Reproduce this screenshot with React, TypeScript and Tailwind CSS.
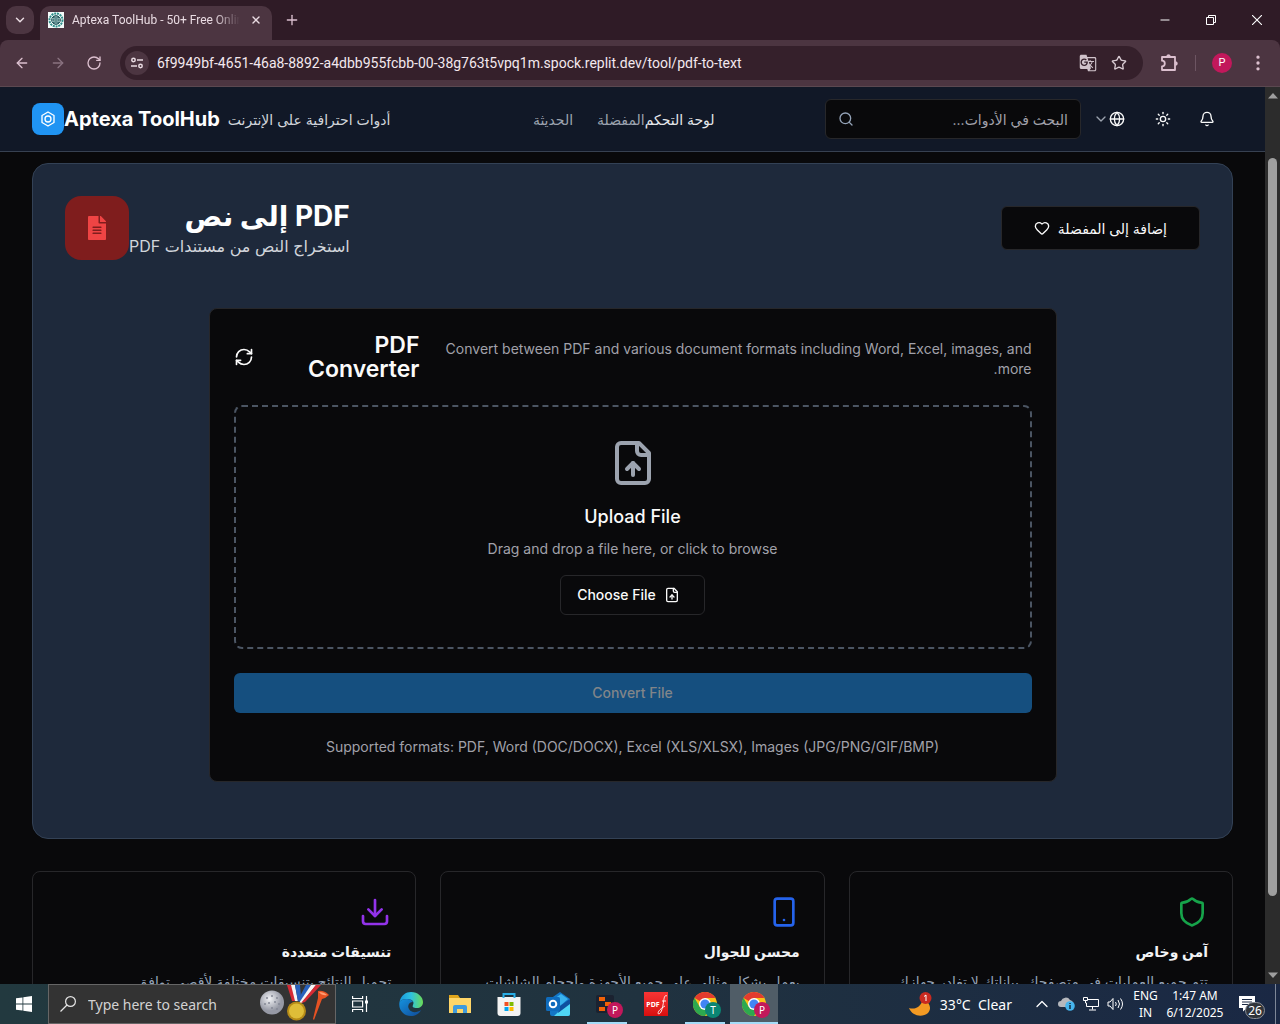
import React from "react";
import {
  ArrowLeft,
  ArrowRight,
  RotateCw,
  ChevronDown,
  ChevronUp,
  X,
  Plus,
  Minus,
  Star,
  Search,
  Globe,
  Sun,
  Bell,
  Heart,
  RefreshCw,
  Download,
  EllipsisVertical,
} from "lucide-react";
import { FaFileAlt } from "react-icons/fa";
import { MdGTranslate } from "react-icons/md";

function FileUpIcon({ className }: { className?: string }) {
  return (
    <svg viewBox="0 0 24 24" fill="none" stroke="currentColor" strokeWidth="2" strokeLinecap="round" strokeLinejoin="round" className={className} aria-hidden="true">
      <path d="M15 2H6a2 2 0 0 0-2 2v16a2 2 0 0 0 2 2h12a2 2 0 0 0 2-2V7Z" />
      <path d="M14 2v4a2 2 0 0 0 2 2h4" />
      <path d="M12 12v6" />
      <path d="m15 15-3-3-3 3" />
    </svg>
  );
}

function ShieldIcon({ className }: { className?: string }) {
  return (
    <svg viewBox="0 0 24 24" fill="none" stroke="currentColor" strokeWidth="2" strokeLinecap="round" strokeLinejoin="round" className={className} aria-hidden="true">
      <path d="M20 13c0 5-3.5 7.5-7.66 8.95a1 1 0 0 1-.67-.01C7.5 20.5 4 18 4 13V6a1 1 0 0 1 1-1c2 0 4.5-1.2 6.24-2.72a1.17 1.17 0 0 1 1.52 0C14.51 3.81 17 5 19 5a1 1 0 0 1 1 1z" />
    </svg>
  );
}

function PhoneIcon({ className }: { className?: string }) {
  return (
    <svg viewBox="0 0 24 24" fill="none" stroke="currentColor" strokeWidth="2" strokeLinecap="round" strokeLinejoin="round" className={className} aria-hidden="true">
      <rect x="5" y="2" width="14" height="20" rx="2" />
      <path d="M12 18h.01" />
    </svg>
  );
}

function HexIcon() {
  return (
    <svg viewBox="0 0 24 24" fill="none" stroke="currentColor" strokeWidth="2" strokeLinejoin="round" className="size-4" aria-hidden="true">
      <path d="M12 1.5 21 6.7v10.6l-9 5.2-9-5.2V6.7z" />
      <circle cx="12" cy="12" r="4.5" />
    </svg>
  );
}

function Favicon() {
  return (
    <svg viewBox="0 0 16 16" className="size-4 shrink-0" aria-hidden="true">
      <rect width="16" height="16" fill="#f4fbfa" />
      <circle cx="8" cy="8" r="6.5" fill="none" stroke="#2f8f8b" strokeWidth="2" strokeDasharray="2 .8" />
      <circle cx="8" cy="8" r="4.3" fill="#d5efec" stroke="#134a50" />
      <path d="M3.7 8h8.6M8 3.7v8.6M5 5.3c2 1 4 1 6 0M5 10.7c2-1 4-1 6 0M6.5 4c-1 3-1 5 0 8M9.5 4c1 3 1 5 0 8" fill="none" stroke="#134a50" strokeWidth=".7" />
    </svg>
  );
}

function TabStrip() {
  return (
    <div className="flex h-10 shrink-0 bg-[#2f1b26] font-['Roboto',sans-serif] text-[#e9dbe2]">
      <button aria-label="Search tabs" className="mt-1.5 ml-1.5 grid h-7 w-7 place-items-center rounded-[10px] bg-[#4c3541]">
        <ChevronDown className="size-3.5" strokeWidth={2.5} />
      </button>
      <div className="mt-1.5 ml-1.5 flex w-[232px] items-center rounded-t-[10px] bg-[#4c3541] pr-2.5 pb-1.5 pl-2">
        <Favicon />
        <span className="ml-2 flex-1 overflow-hidden text-[12px] leading-4 whitespace-nowrap [mask-image:linear-gradient(to_right,black_85%,transparent)]">
          Aptexa ToolHub - 50+ Free Online
        </span>
        <button aria-label="Close tab" className="ml-2.5">
          <X className="size-3" strokeWidth={2.8} />
        </button>
      </div>
      <button aria-label="New tab" className="ml-3 grid w-4 place-items-center text-[#dcc0cf]">
        <Plus className="size-4" />
      </button>
      <div className="ml-auto flex text-white">
        <button aria-label="Minimize" className="grid w-[46px] place-items-center">
          <Minus className="size-3.5" strokeWidth={1.7} />
        </button>
        <button aria-label="Restore" className="grid w-[46px] place-items-center">
          <svg viewBox="0 0 10 10" className="size-2.5" fill="none" stroke="currentColor" aria-hidden="true">
            <path d="M.5 2.5h7v7h-7zM2.5 2.5v-2h7v7h-2" />
          </svg>
        </button>
        <button aria-label="Close window" className="grid w-[46px] place-items-center">
          <svg viewBox="0 0 10 10" className="size-2.5" fill="none" stroke="currentColor" strokeWidth="1.1" aria-hidden="true">
            <path d="m0 0 10 10M10 0 0 10" />
          </svg>
        </button>
      </div>
    </div>
  );
}

function Toolbar() {
  return (
    <div className="shrink-0 bg-[#2f1b26] font-['Roboto',sans-serif]">
      <div className="flex h-[47px] items-center rounded-t-lg border-b border-[#5b4850] bg-[#4c3541] pl-3.5 text-[#dcc0cf]">
        <button aria-label="Back" className="mr-5">
          <ArrowLeft className="size-4" />
        </button>
        <button aria-label="Forward" className="mr-5 text-[#8a7380]">
          <ArrowRight className="size-4" />
        </button>
        <button aria-label="Reload" className="mr-[18px]">
          <RotateCw className="size-4" />
        </button>
        <div className="flex h-[34px] flex-1 items-center rounded-full bg-[#35202b] pr-4 pl-[5px]">
          <button aria-label="Site information" className="grid size-6 place-items-center rounded-full bg-[#4c3541] text-[#e9dbe2]">
            <svg viewBox="0 0 14 14" className="size-3.5" fill="none" stroke="currentColor" strokeWidth="1.5" aria-hidden="true">
              <circle cx="3.5" cy="4" r="1.7" />
              <path d="M7 4h6M1 10h6" />
              <circle cx="10.5" cy="10" r="1.7" />
            </svg>
          </button>
          <input
            aria-label="Address"
            readOnly
            value="6f9949bf-4651-46a8-8892-a4dbb955fcbb-00-38g763t5vpq1m.spock.replit.dev/tool/pdf-to-text"
            className="mx-2 min-w-0 flex-1 bg-transparent text-[14px] text-[#f3e8ee] outline-none"
          />
          <button aria-label="Translate" className="mr-3.5 text-[#d0c2ca]">
            <MdGTranslate className="size-[18px]" />
          </button>
          <button aria-label="Bookmark" className="text-[#d8cad2]">
            <Star className="size-4" />
          </button>
        </div>
        <button aria-label="Extensions" className="ml-4">
          <svg viewBox="0 0 20 20" className="size-5" fill="none" stroke="currentColor" strokeWidth="1.8" strokeLinejoin="round" aria-hidden="true">
            <path d="M3 4h13v13H3v-3.7c1.7 0 2.8-1.1 2.8-2.8S4.7 7.700 3 7.7z" />
            <path d="M7.5 3.5a2 2 0 0 1 4 0zM16.5 8.5a2 2 0 0 1 0 4z" fill="currentColor" strokeWidth=".4" />
          </svg>
        </button>
        <span className="ml-4 h-4 w-px bg-[#6d5562]" />
        <button aria-label="Profile" className="ml-4 grid size-5 place-items-center rounded-full bg-[#c2185b] text-[11px] text-white">
          P
        </button>
        <button aria-label="Menu" className="mr-3 ml-4">
          <EllipsisVertical className="size-5" />
        </button>
      </div>
    </div>
  );
}

function SiteHeader() {
  return (
    <header className="flex h-[65px] shrink-0 items-center border-b border-[#374151] bg-[#111827] pr-9 pl-8">
      <div className="grid size-8 place-items-center rounded-lg bg-[#2094f3] text-white">
        <HexIcon />
      </div>
      <span className="text-[20px] leading-7 font-bold whitespace-nowrap text-white">Aptexa ToolHub</span>
      <span dir="rtl" className="ml-2 text-[14px] whitespace-nowrap text-[#d1d5db]">أدوات احترافية على الإنترنت</span>
      <nav dir="rtl" className="flex flex-1 justify-center pl-8 text-[14px] font-medium whitespace-nowrap">
        <a href="#dashboard" className="text-[#e5e7eb]">لوحة التحكم</a>
        <a href="#favorites" className="ml-6 text-[#9ca3af]">المفضلة</a>
        <a href="#recent" className="text-[#9ca3af]">الحديثة</a>
      </nav>
      <label className="mr-2 flex h-10 w-64 items-center rounded-md border border-[#27272a] bg-[#09090b] px-3 text-[#94a3b8]">
        <Search className="size-4 shrink-0" />
        <input dir="rtl" aria-label="البحث في الأدوات" placeholder="البحث في الأدوات..." className="min-w-0 flex-1 bg-transparent text-[14px] outline-none placeholder:text-[#a1a1aa]" />
      </label>
      <button aria-label="Language" className="flex h-10 w-[52px] items-center pl-1 text-[#fafafa]">
        <ChevronDown className="size-4 text-[#9ca3af]" />
        <Globe className="size-4" />
      </button>
      <button aria-label="Theme" className="grid h-10 w-11 place-items-center text-[#fafafa]">
        <Sun className="size-4" />
      </button>
      <button aria-label="Notifications" className="grid h-10 w-11 place-items-center text-[#fafafa]">
        <Bell className="size-4" />
      </button>
    </header>
  );
}

function Converter() {
  return (
    <section className="mx-auto mt-12 mb-6 max-w-[848px] rounded-lg border border-[#27272a] bg-[#09090b] p-6 text-[14px] leading-5">
      <div className="flex items-center">
        <button aria-label="Reset" className="text-[#fafafa]">
          <RefreshCw className="size-5" />
        </button>
        <h2 dir="rtl" className="ml-12 w-[118px] shrink-0 text-[23px] leading-6 font-semibold text-[#fafafa]">PDF Converter</h2>
        <p dir="rtl" className="ml-5 flex-1 pt-1 text-[#a1a1aa]">
          Convert between PDF and various document formats including Word, Excel, images, and more.
        </p>
      </div>
      <div className="mt-6 flex flex-col items-center rounded-lg border-2 border-dashed border-[#4b5563] p-8">
        <FileUpIcon className="size-12 text-[#9ca3af]" />
        <h3 className="mt-4 text-[18px] leading-7 font-medium text-[#fafafa]">Upload File</h3>
        <p className="mt-2 text-[#a1a1aa]">Drag and drop a file here, or click to browse</p>
        <button className="mt-4 flex h-10 items-center rounded-md border border-[#27272a] pr-6 pl-4 font-medium text-[#fafafa]">
          Choose File
          <FileUpIcon className="ml-2 size-4" />
        </button>
      </div>
      <button disabled className="mt-6 h-10 w-full rounded-md bg-[#154f7f] font-medium text-[#818589]">
        Convert File
      </button>
      <p className="mt-6 text-center text-[#a1a1aa]">
        Supported formats: PDF, Word (DOC/DOCX), Excel (XLS/XLSX), Images (JPG/PNG/GIF/BMP)
      </p>
    </section>
  );
}

const features = [
  {
    icon: <Download className="size-8 text-[#9333ea]" />,
    title: "تنسيقات متعددة",
    text: "تحميل النتائج بتنسيقات مختلفة لأقصى توافق",
  },
  {
    icon: <PhoneIcon className="size-8 text-[#2563eb]" />,
    title: "محسن للجوال",
    text: "يعمل بشكل مثالي على جميع الأجهزة وأحجام الشاشات",
  },
  {
    icon: <ShieldIcon className="size-8 text-[#16a34a]" />,
    title: "آمن وخاص",
    text: "تتم جميع العمليات في متصفحك. بياناتك لا تغادر جهازك",
  },
];

function Page() {
  return (
    <div className="flex min-w-0 flex-1 flex-col bg-[#09090b] font-['Inter','DejaVu_Sans',sans-serif]">
      <SiteHeader />
      <main className="min-h-0 flex-1 overflow-hidden px-8 pt-[11px]">
        <section className="rounded-2xl border border-[#334155] bg-[#1e293b] p-8">
          <div className="flex items-center">
            <div className="grid size-16 place-items-center rounded-2xl bg-[#7f1d1d] text-[#ef4444]">
              <FaFileAlt className="size-6" />
            </div>
            <div dir="rtl">
              <h1 className="text-[28px] leading-9 font-bold text-white">PDF إلى نص</h1>
              <p className="text-[16px] leading-6 text-[#d1d5db]">استخراج النص من مستندات PDF</p>
            </div>
            <button dir="rtl" className="ml-auto flex h-11 items-center gap-2 rounded-md border border-[#27272a] bg-[#09090b] px-8 text-[14px] font-medium text-[#fafafa]">
              إضافة إلى المفضلة
              <Heart className="size-4" />
            </button>
          </div>
          <Converter />
        </section>
        <div className="mt-8 grid grid-cols-3 gap-6">
          {features.map((f) => (
            <article key={f.title} dir="rtl" className="rounded-lg border border-[#27272a] p-6">
              {f.icon}
              <h3 className="mt-3 text-[14px] leading-6 font-semibold text-[#f3f4f6]">{f.title}</h3>
              <p className="mt-2 text-[14px] leading-5 text-[#94a3b8]">{f.text}</p>
            </article>
          ))}
        </div>
      </main>
    </div>
  );
}

function ScrollBar() {
  return (
    <div className="flex w-[15px] shrink-0 flex-col items-center bg-[#2c2c2c] py-1.5 text-[#9f9f9f]">
      <svg viewBox="0 0 10 6" className="h-1.5 w-2.5" aria-hidden="true"><path d="M0 5.5 5 0l5 5.5z" fill="currentColor" /></svg>
      <div className="mt-[59px] mb-[76px] w-[9px] flex-1 rounded-full bg-[#9f9f9f]" />
      <svg viewBox="0 0 10 6" className="h-1.5 w-2.5" aria-hidden="true"><path d="M0 .5 5 6l5-5.5z" fill="currentColor" /></svg>
    </div>
  );
}

function Chrome() {
  return (
    <svg viewBox="0 0 24 24" className="size-6" aria-hidden="true">
      <circle cx="12" cy="12" r="12" fill="#fbc116" />
      <path d="M12 12 1.6 6A12 12 0 0 1 22.4 6H12z" fill="#e33b2e" />
      <path d="M1.6 6A12 12 0 0 0 12 24l5.2-9L12 12 6.8 15z" fill="#2da94f" />
      <circle cx="12" cy="12" r="6" fill="#fff" />
      <circle cx="12" cy="12" r="4.6" fill="#4285f4" />
    </svg>
  );
}

function Badge({ letter, teal }: { letter: string; teal?: boolean }) {
  return (
    <span className={(teal ? "bg-[#0b8573]" : "bg-[#c2185b]") + " absolute right-2 bottom-1.5 grid size-4 place-items-center rounded-full text-[10px] leading-none text-white"}>
      {letter}
    </span>
  );
}

function AppButton({ label, running, active, children }: { label: string; running?: boolean; active?: boolean; children: React.ReactNode }) {
  return (
    <button aria-label={label} className={(active ? "bg-[#505d67]" : "") + " relative grid h-10 w-12 place-items-center"}>
      {children}
      {running && <span className={(active ? "inset-x-0" : "inset-x-1") + " absolute bottom-0 h-0.5 bg-[#a4dcf8]"} />}
    </button>
  );
}

function Taskbar() {
  return (
    <footer className="flex h-10 shrink-0 bg-linear-to-r from-[#22393f] via-[#20323f] to-[#1a2844] text-white">
      <button aria-label="Start" className="grid w-12 place-items-center">
        <svg viewBox="0 0 16 16" className="size-4" fill="currentColor" aria-hidden="true">
          <path d="M0 2.3 6.5 1.4v6.2H0zM7.3 1.3 16 0v7.6H7.3zM0 8.4h6.5v6.2L0 13.7zM7.3 8.4H16V16l-8.7-1.3z" />
        </svg>
      </button>
      <label className="relative flex w-72 items-center overflow-hidden border border-[#666] bg-[#333] pl-[11px]">
        <svg viewBox="0 0 16 16" className="size-4" fill="none" stroke="#e5e5e5" strokeWidth="1.2" aria-hidden="true">
          <circle cx="10.5" cy="5.5" r="4.9" />
          <path d="M7 9 .5 15.5" />
        </svg>
        <input aria-label="Type here to search" placeholder="Type here to search" className="ml-3 w-36 bg-transparent text-[14px] outline-none placeholder:text-[#d2d2d2]" />
        <svg viewBox="0 0 72 38" className="absolute top-0 right-1 h-[38px] w-[72px]" aria-hidden="true">
          <defs>
            <radialGradient id="ball" cx=".4" cy=".35"><stop stopColor="#f2f3f6" /><stop offset="1" stopColor="#9699a5" /></radialGradient>
          </defs>
          <circle cx="13" cy="17.5" r="12" fill="url(#ball)" />
          <g fill="#858996"><circle cx="8" cy="13" r="1" /><circle cx="13" cy="11" r="1" /><circle cx="18" cy="13" r="1" /><circle cx="10" cy="18" r="1" /><circle cx="16" cy="17" r="1" /><circle cx="20" cy="19" r="1" /><circle cx="13" cy="23" r="1" /><circle cx="18" cy="24" r="1" /><circle cx="6" cy="19" r="1" /></g>
          <path d="M28 0h4l6 16h-5z" fill="#d62b35" /><path d="M32 0h4l3 16h-3z" fill="#f5f5f5" /><path d="M36 0h5l1 12-3 5z" fill="#2861bd" />
          <path d="M47 0h5L42 18l-3-3z" fill="#2861bd" /><path d="M52 0h5L43 18h-3z" fill="#f5f5f5" /><path d="M57 0h5L46 17l-4 1z" fill="#d62b35" />
          <circle cx="37.5" cy="26" r="9.5" fill="#b68b17" /><circle cx="37.5" cy="26" r="7.5" fill="#dfbd38" />
          <path d="M59 6q6-1 11 4-3 3-7 4L55 35l-1-1 5-21z" fill="#e65223" /><path d="M60 7q5 0 8 3-5 1-8-3z" fill="#ff9b70" />
        </svg>
      </label>
      <button aria-label="Task view" className="grid w-12 place-items-center">
        <svg viewBox="0 0 16 16" className="size-4" fill="none" stroke="currentColor" strokeWidth="1.2" aria-hidden="true">
          <path d="M.6 0v2.5h10V0M.6 5h10v6H.6zM.6 16v-2.5h10V16M14.5 0v16" />
          <path d="M13 4.5h3v3h-3z" fill="currentColor" stroke="none" />
        </svg>
      </button>
      <div className="ml-[3px] flex gap-px">
        <AppButton label="Edge">
          <svg viewBox="0 0 24 24" className="size-6" aria-hidden="true">
            <defs>
              <linearGradient id="edgeTop" x1="0" x2="1"><stop stopColor="#1796dc" /><stop offset=".5" stopColor="#2fc2df" /><stop offset="1" stopColor="#6bdb56" /></linearGradient>
              <linearGradient id="edgeLow" x2="1" y2="1"><stop stopColor="#1592de" /><stop offset="1" stopColor="#104b99" /></linearGradient>
            </defs>
            <path d="M.5 10C2 3 7 0 12 0c7 0 12 5 12 10 0 4-3 6-6 6-4 0-5-1-4-3 2-4-2-6-6-6-4 0-6 1-7.5 3z" fill="url(#edgeTop)" />
            <path d="M.5 10C2 8 4 7 8 7c3 0 5 1 6 3-4 0-6 4-4 7 2 4 8 4 12 1-2 4-6 6-10 6C5 24-1 18 .5 10z" fill="url(#edgeLow)" />
          </svg>
        </AppButton>
        <AppButton label="File Explorer">
          <svg viewBox="0 0 24 24" className="size-6" aria-hidden="true">
            <path d="M1 3h9l2 3h11v15H1z" fill="#e0a51b" /><path d="M1 6h22v15H1z" fill="#ffd668" />
            <path d="M5 21v-6q0-2 2-2h10q2 0 2 2v6h-4v-4H9v4z" fill="#3f9bdd" />
          </svg>
        </AppButton>
        <AppButton label="Store">
          <svg viewBox="0 0 24 24" className="size-6" aria-hidden="true">
            <path d="M.5 5h23v16q0 3-3 3h-17q-3 0-3-3z" fill="#f3f3f3" />
            <path d="M6.5 6V2h11v4" fill="none" stroke="#29aee6" strokeWidth="2" />
            <path d="M7.5 10h4v4h-4z" fill="#f25022" /><path d="M12.5 10h4v4h-4z" fill="#7fba00" /><path d="M7.5 15h4v4h-4z" fill="#00a4ef" /><path d="M12.5 15h4v4h-4z" fill="#ffb900" />
          </svg>
        </AppButton>
        <AppButton label="Outlook">
          <svg viewBox="0 0 24 24" className="size-6" aria-hidden="true">
            <path d="M4 7 14 0l10 7v15q0 2-2 2H6q-2 0-2-2z" fill="#1476c6" /><path d="m8 7 7-5 7 5-8 7z" fill="#3ab3ee" />
            <path d="M24 9v13q0 2-2 2H8z" fill="#4fd6f5" /><path d="m14 14 10-7v5L12 21z" fill="#0f4f9e" />
            <rect y="5" width="14" height="14" rx="1.5" fill="#0f6cbd" /><circle cx="7" cy="12" r="3.3" fill="none" stroke="#fff" strokeWidth="2" />
          </svg>
        </AppButton>
        <AppButton label="Replit" running>
          <svg viewBox="0 0 24 24" className="size-6" aria-hidden="true">
            <rect x="1" y="3" width="18" height="18" rx="2" fill="#1b2230" />
            <path d="M4 5h6v4H4zM10 10h6v4h-6zM4 15h6v4H4z" fill="#f26207" />
          </svg>
          <Badge letter="P" />
        </AppButton>
        <AppButton label="PDF reader">
          <span className="relative grid size-6 place-items-center bg-linear-to-b from-[#f93434] to-[#d80d0d]">
            <span className="mr-1.5 text-[7px] leading-none font-bold text-white">PDF</span>
            <svg viewBox="0 0 24 24" className="absolute inset-0 size-6" fill="none" stroke="#fff" strokeWidth=".9" aria-hidden="true">
              <path d="M23 4c-3-2-3 4-4 9s-2 8-4 9c-2 0-1-4 6-8M18 9h4" />
            </svg>
          </span>
        </AppButton>
        <AppButton label="Chrome, profile T" running>
          <Chrome />
          <Badge letter="T" teal />
        </AppButton>
        <AppButton label="Chrome, profile P" running active>
          <Chrome />
          <Badge letter="P" />
        </AppButton>
      </div>
      <div className="ml-auto flex items-center">
        <button className="flex items-center text-[14px] whitespace-nowrap">
          <svg viewBox="0 0 24 24" className="mr-2 size-6" aria-hidden="true">
            <path d="M1 16c6 2 12-1 14-9 7 3 9 10 5 14-6 5-16 3-19-5z" fill="#f39a23" />
            <circle cx="17.5" cy="6" r="6" fill="#c92a20" /><path d="m16 4.5 2-1.5v6" stroke="#fff" fill="none" />
          </svg>
          33°C&nbsp; Clear
        </button>
        <button aria-label="Hidden icons" className="ml-5"><ChevronUp className="size-5" strokeWidth={1.5} /></button>
        <svg viewBox="0 0 17 14" className="ml-1.5 h-3.5 w-[17px]" aria-hidden="true">
          <path d="M3 10a3 3 0 0 1 0-6 5 5 0 0 1 9-1 4 4 0 0 1 2 7z" fill="#b5b8bd" /><circle cx="12" cy="9" r="4.8" fill="#45b4ed" /><path d="M12 8v4M12 6v1" stroke="#123" strokeWidth="1.4" />
        </svg>
        <svg viewBox="0 0 16 14" className="ml-2 h-3.5 w-4" fill="none" stroke="currentColor" aria-hidden="true">
          <path d="M5 2.5h10.5v7H3.5V6M9.5 9.5v3M6 13h7M.5.5h4v3h-4zM2.5 3.5V6h1" />
        </svg>
        <svg viewBox="0 0 17 14" className="ml-2 h-3.5 w-[17px]" fill="none" stroke="currentColor" aria-hidden="true">
          <path d="M1 5h2l3-3.5v11L3 9H1zM8.5 5q1.5 2 0 4M11 3q3 4 0 8M13.5 1.5q4 5.5 0 11" />
        </svg>
        <div className="ml-2 w-[27px] text-center text-[12px] leading-[17px]">ENG<br />IN</div>
        <div className="ml-1 w-16 text-center text-[12px] leading-[17px] whitespace-nowrap">1:47 AM<br />6/12/2025</div>
        <button aria-label="Notifications, 26 new" className="relative ml-2 h-10 w-9">
          <svg viewBox="0 0 16 16" className="absolute top-3 left-1 size-4" aria-hidden="true">
            <path d="M0 0h16v12h-8l-4 3.5V12H0z" fill="#fff" /><path d="M3 3.5h10M3 6h10M3 8.5h7" stroke="#1b2943" />
          </svg>
          <span className="absolute top-[18px] left-2.5 grid h-[17px] w-5 place-items-center rounded-full border border-[#8a8f98] bg-[#30343a] text-[12px] leading-none">26</span>
        </button>
        <span className="mr-1 ml-1 h-10 w-px bg-[#7d8797]" />
      </div>
    </footer>
  );
}

export default function App() {
  return (
    <div className="flex h-screen flex-col overflow-hidden font-['Noto_Sans','DejaVu_Sans',sans-serif]">
      <TabStrip />
      <Toolbar />
      <div className="flex min-h-0 flex-1">
        <Page />
        <ScrollBar />
      </div>
      <Taskbar />
    </div>
  );
}
